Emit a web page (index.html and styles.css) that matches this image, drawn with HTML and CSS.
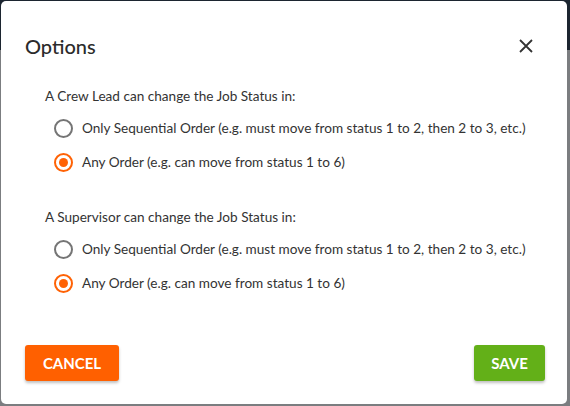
FILE: index.html
```html
<!DOCTYPE html>
<html>
<head>
<meta charset="utf-8">
<link rel="stylesheet" href="styles.css">
</head>
<body>
<div class="backdrop">
  <div class="modal">
    <div class="modal-header">
      <h2 class="title">Options</h2>
      <button class="close" aria-label="Close">
        <svg width="14" height="14" viewBox="0 0 14 14"><path d="M1 1L13 13M13 1L1 13" stroke="#333" stroke-width="1.8" fill="none"/></svg>
      </button>
    </div>
    <div class="modal-body">
      <div class="group">
        <div class="group-label">A Crew Lead can change the Job Status in:</div>
        <label class="option"><span class="radio"></span><span>Only Sequential Order (e.g. must move from status 1 to 2, then 2 to 3, etc.)</span></label>
        <label class="option"><span class="radio checked"></span><span>Any Order (e.g. can move from status 1 to 6)</span></label>
      </div>
      <div class="group">
        <div class="group-label">A Supervisor can change the Job Status in:</div>
        <label class="option"><span class="radio"></span><span>Only Sequential Order (e.g. must move from status 1 to 2, then 2 to 3, etc.)</span></label>
        <label class="option"><span class="radio checked"></span><span>Any Order (e.g. can move from status 1 to 6)</span></label>
      </div>
    </div>
    <div class="modal-footer">
      <button class="btn btn-cancel">CANCEL</button>
      <button class="btn btn-save">SAVE</button>
    </div>
  </div>
</div>
</body>
</html>
```

FILE: styles.css
```css
html, body {
  margin: 0;
  padding: 0;
  height: 100%;
}
body {
  background: linear-gradient(to bottom, #1c2530 0, #1c2530 50px, #7b7d80 50px, #7b7d80 100%);
  font-family: Lato, "Open Sans", sans-serif;
  color: #333;
}
.backdrop {
  padding: 1px 3px 2px 1px;
  height: 100%;
  box-sizing: border-box;
  display: flex;
}
.modal {
  flex: 1;
  background: #fff;
  border-radius: 5px;
  display: flex;
  flex-direction: column;
}
.modal-header {
  display: flex;
  align-items: center;
  justify-content: space-between;
  padding: 31px 34px 0 24px;
  height: 28px;
}
.title {
  margin: 0;
  font-size: 20px;
  font-weight: 500;
  color: #2b2b2b;
  line-height: 26px;
}
.close {
  border: 0;
  background: none;
  padding: 0;
  width: 14px;
  height: 14px;
  display: flex;
  cursor: pointer;
}
.modal-body {
  padding: 27px 20px 0 44px;
  flex: 1;
}
.group {
  margin-bottom: 36px;
}
.group-label {
  font-size: 13.6px;
  line-height: 18px;
  margin-bottom: 13px;
  color: #333;
}
.option {
  display: flex;
  align-items: center;
  gap: 9px;
  font-size: 13.6px;
  line-height: 18px;
  color: #333;
  height: 20px;
  margin-bottom: 14px;
  margin-left: 9px;
}
.option:last-child {
  margin-bottom: 0;
}
.radio {
  width: 19px;
  height: 19px;
  box-sizing: border-box;
  border: 2px solid #757575;
  border-radius: 50%;
  flex: none;
  position: relative;
}
.radio.checked {
  border-color: #ff6205;
}
.radio.checked::after {
  content: "";
  position: absolute;
  left: 3px;
  top: 3px;
  width: 9px;
  height: 9px;
  border-radius: 50%;
  background: #ff6205;
}
.modal-footer {
  display: flex;
  justify-content: space-between;
  padding: 0 22px 23px 24px;
}
.btn {
  border: 0;
  border-radius: 3px;
  height: 36px;
  color: #fff;
  font-family: Lato, sans-serif;
  font-weight: 700;
  font-size: 15px;
  padding: 0 15px;
  box-shadow: 0 2px 3px rgba(0,0,0,0.25);
  cursor: pointer;
}
.btn-cancel {
  background: #ff6000;
  width: 94px;
}
.btn-save {
  background: #63b018;
  width: 71px;
}
```
